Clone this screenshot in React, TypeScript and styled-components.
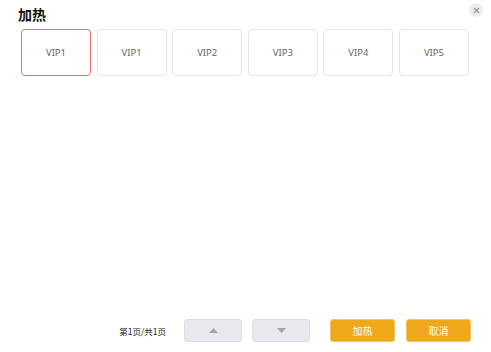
import React from "react";
import styled, { createGlobalStyle } from "styled-components";

const Global = createGlobalStyle`
  html, body { margin: 0; padding: 0; background: #fff; }
  body { font-family: "Noto Sans CJK SC", "Noto Sans", sans-serif; }
`;

const Dialog = styled.div`
  position: relative;
  width: 491px;
  height: 352px;
  box-sizing: border-box;
  display: flex;
  flex-direction: column;
  padding: 4px 20px 10px 21px;
  background: #fff;
`;

const Title = styled.div`
  font-size: 14px;
  font-weight: 700;
  color: #111;
  line-height: 20px;
  margin-left: -3px;
  height: 25px;
`;

const Close = styled.button`
  position: absolute;
  top: 3px;
  right: 8px;
  width: 14px;
  height: 14px;
  border-radius: 50%;
  border: none;
  padding: 0;
  background: #ececec;
  display: flex;
  align-items: center;
  justify-content: center;
`;

const Cards = styled.div`
  display: grid;
  grid-template-columns: repeat(6, 70px);
  column-gap: 5.6px;
`;

const Card = styled.div<{ $active?: boolean }>`
  height: 47px;
  box-sizing: border-box;
  border: 1px solid ${(p) => (p.$active ? "#f26b6b" : "#e6e6e6")};
  border-radius: 4px;
  display: flex;
  align-items: center;
  justify-content: center;
  font-family: "Noto Sans", sans-serif;
  font-size: 9.5px;
  color: #666;
`;

const Spacer = styled.div`
  flex: 1;
`;

const Footer = styled.div`
  display: flex;
  align-items: center;
  justify-content: flex-end;
  height: 23px;
`;

const PageText = styled.span`
  font-size: 8.5px;
  color: #222;
  margin-right: 18px;
`;

const NavButton = styled.button<{ $gap: number }>`
  width: 58px;
  height: 23px;
  box-sizing: border-box;
  border: 1px solid #dcdde2;
  border-radius: 3px;
  background: #e8e9ee;
  margin-right: ${(p) => p.$gap}px;
  display: flex;
  align-items: center;
  justify-content: center;
  padding: 0;
`;

const ActionButton = styled.button<{ $gap: number }>`
  width: 65px;
  height: 23px;
  box-sizing: border-box;
  border: 1px solid #f3c35f;
  border-radius: 3px;
  background: #f0a81b;
  color: #fff;
  font-family: "Noto Sans CJK SC", sans-serif;
  font-size: 10px;
  margin-right: ${(p) => p.$gap}px;
  padding: 0;
`;

const Tri = ({ up }: { up?: boolean }) => (
  <svg width="9" height="5" viewBox="0 0 9 5">
    <path d={up ? "M0 5 L4.5 0 L9 5 Z" : "M0 0 L9 0 L4.5 5 Z"} fill="#a3a5ab" />
  </svg>
);

const vips = ["VIP1", "VIP1", "VIP2", "VIP3", "VIP4", "VIP5"];

export default function App() {
  return (
    <>
      <Global />
      <Dialog>
        <Title>加热</Title>
        <Close aria-label="close">
          <svg width="7" height="7" viewBox="0 0 7 7">
            <path d="M1 1 L6 6 M6 1 L1 6" stroke="#999" strokeWidth="1.2" />
          </svg>
        </Close>
        <Cards>
          {vips.map((v, i) => (
            <Card key={i} $active={i === 0}>
              {v}
            </Card>
          ))}
        </Cards>
        <Spacer />
        <Footer>
          <PageText>第1页/共1页</PageText>
          <NavButton $gap={10}>
            <Tri up />
          </NavButton>
          <NavButton $gap={20}>
            <Tri />
          </NavButton>
          <ActionButton $gap={11}>加热</ActionButton>
          <ActionButton $gap={0}>取消</ActionButton>
        </Footer>
      </Dialog>
    </>
  );
}
